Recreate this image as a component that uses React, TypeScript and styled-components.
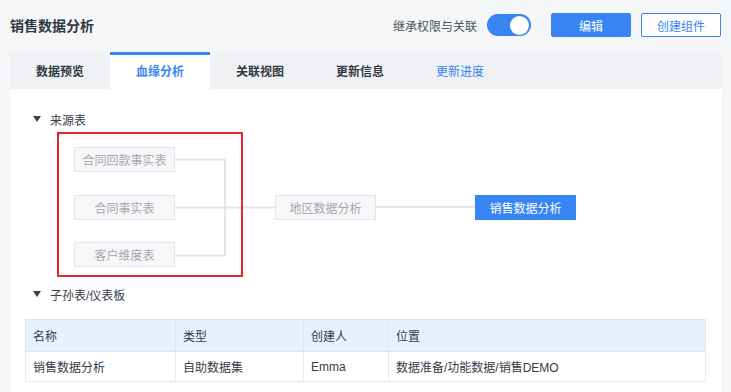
import React from "react";
import styled, { createGlobalStyle } from "styled-components";

const Global = createGlobalStyle`
  html, body {
    margin: 0;
    padding: 0;
    background: #f5f6f8;
  }
  * {
    box-sizing: border-box;
  }
`;

const BLUE = "#3685f2";

const sources = ["合同回款事实表", "合同事实表", "客户维度表"];

const rows = [
  { name: "销售数据分析", type: "自助数据集", owner: "Emma", path: "数据准备/功能数据/销售DEMO" },
];

const tabs = ["数据预览", "血缘分析", "关联视图", "更新信息", "更新进度"];

const App = () => {
  return (
    <Page>
      <Global />
      <Header>
        <Title>销售数据分析</Title>
        <Actions>
          <ToggleLabel>继承权限与关联</ToggleLabel>
          <Toggle>
            <Knob />
          </Toggle>
          <Button primary>编辑</Button>
          <Button>创建组件</Button>
        </Actions>
      </Header>

      <TabBar>
        {tabs.map((t, i) => (
          <Tab key={t} active={i === 1} link={i === 4}>
            {t}
          </Tab>
        ))}
      </TabBar>

      <Content>
        <SectionTitle>
          <Caret />
          来源表
        </SectionTitle>

        <Diagram>
          <Highlight />
          <SourceColumn>
            {sources.map((s) => (
              <Node key={s}>{s}</Node>
            ))}
          </SourceColumn>
          <Fork width="100" height="145" viewBox="0 0 100 145">
            <path
              d="M0 27.5 H50 M0 75.5 H50 M0 123.5 H50 M50 27 V124 M50 75.5 H100"
              stroke="#e3e5ea"
              strokeWidth="2"
              fill="none"
            />
          </Fork>
          <MidWrap>
            <Node>地区数据分析</Node>
            <Link />
            <Node target>销售数据分析</Node>
          </MidWrap>
        </Diagram>

        <SectionTitle second>
          <Caret />
          子孙表/仪表板
        </SectionTitle>

        <Table>
          <thead>
            <tr>
              <Th style={{ width: 150 }}>名称</Th>
              <Th style={{ width: 128 }}>类型</Th>
              <Th style={{ width: 85 }}>创建人</Th>
              <Th>位置</Th>
            </tr>
          </thead>
          <tbody>
            {rows.map((r) => (
              <tr key={r.name}>
                <Td>{r.name}</Td>
                <Td>{r.type}</Td>
                <Td>{r.owner}</Td>
                <Td>{r.path}</Td>
              </tr>
            ))}
          </tbody>
        </Table>
      </Content>
    </Page>
  );
};

export default App;

const Page = styled.div`
  width: 731px;
  height: 392px;
  overflow: hidden;
  padding: 0 10px;
  background: #f5f6f8;
  font-family: "Liberation Sans", "Noto Sans CJK SC", sans-serif;
  color: #333a45;
`;

const Header = styled.div`
  height: 52px;
  display: flex;
  align-items: center;
  justify-content: space-between;
  padding-bottom: 2px;
`;

const Title = styled.div`
  font-size: 14px;
  font-weight: 600;
  color: #2f3744;
`;

const Actions = styled.div`
  display: flex;
  align-items: center;
`;

const ToggleLabel = styled.span`
  font-size: 12px;
  color: #4b525c;
  margin-right: 10px;
`;

const Toggle = styled.div`
  width: 44px;
  height: 22px;
  border-radius: 11px;
  background: ${BLUE};
  display: flex;
  align-items: center;
  justify-content: flex-end;
  padding-right: 2px;
  margin-right: 10px;
`;

const Knob = styled.div`
  width: 19px;
  height: 19px;
  border-radius: 50%;
  background: #fff;
`;

const Button = styled.div<{ primary?: boolean }>`
  width: 80px;
  height: 24px;
  border-radius: 2px;
  display: flex;
  align-items: center;
  justify-content: center;
  font-size: 12px;
  margin-left: 10px;
  background: ${(p) => (p.primary ? BLUE : "#fff")};
  color: ${(p) => (p.primary ? "#fff" : BLUE)};
  border: 1px solid ${BLUE};
`;

const TabBar = styled.div`
  height: 37px;
  display: flex;
  background: #eff1f4;
`;

const Tab = styled.div<{ active?: boolean; link?: boolean }>`
  width: 100px;
  display: flex;
  align-items: center;
  justify-content: center;
  font-size: 12px;
  font-weight: ${(p) => (p.link ? 400 : 600)};
  color: ${(p) => (p.active || p.link ? BLUE : "#333a45")};
  background: ${(p) => (p.active ? "#fff" : "transparent")};
  border-top: 3px solid ${(p) => (p.active ? BLUE : "transparent")};
  padding-bottom: 3px;
`;

const Content = styled.div`
  background: #fff;
  height: 303px;
  padding-top: 22px;
`;

const SectionTitle = styled.div<{ second?: boolean }>`
  height: 16px;
  display: flex;
  align-items: center;
  padding-left: 23px;
  font-size: 12px;
  color: #3a414c;
  margin-top: ${(p) => (p.second ? "9px" : "0")};
`;

const Caret = styled.span`
  width: 0;
  height: 0;
  border-left: 4px solid transparent;
  border-right: 4px solid transparent;
  border-top: 6px solid #3a414c;
  margin-right: 9px;
`;

const Diagram = styled.div`
  position: relative;
  height: 145px;
  margin-top: 5px;
  display: flex;
  padding-left: 64px;
`;

const Highlight = styled.div`
  position: absolute;
  left: 47px;
  top: 0;
  width: 186px;
  height: 145px;
  border: 2px solid #e8262c;
`;

const SourceColumn = styled.div`
  display: flex;
  flex-direction: column;
  justify-content: space-between;
  padding: 15px 0 10px;
`;

const Node = styled.div<{ target?: boolean }>`
  width: 101px;
  height: 25px;
  display: flex;
  align-items: center;
  justify-content: center;
  font-size: 12px;
  background: ${(p) => (p.target ? BLUE : "#f6f7f9")};
  color: ${(p) => (p.target ? "#fff" : "#a3a8b0")};
  border: 1px solid ${(p) => (p.target ? BLUE : "#e3e5ea")};
`;

const Fork = styled.svg`
  display: block;
  flex: none;
`;

const MidWrap = styled.div`
  display: flex;
  align-items: center;
  height: 150px;
`;

const Link = styled.div`
  width: 99px;
  height: 2px;
  background: #e3e5ea;
`;

const Table = styled.table`
  margin: 17px 0 0 15px;
  width: 681px;
  border-collapse: collapse;
  font-size: 12px;
  color: #353c47;
`;

const Th = styled.th`
  height: 32px;
  text-align: left;
  font-weight: 400;
  padding: 0 7px;
  background: #e8f0fd;
  border: 1px solid #dfe5ee;
`;

const Td = styled.td`
  height: 30px;
  padding: 0 7px;
  border: 1px solid #e4e8ef;
`;
